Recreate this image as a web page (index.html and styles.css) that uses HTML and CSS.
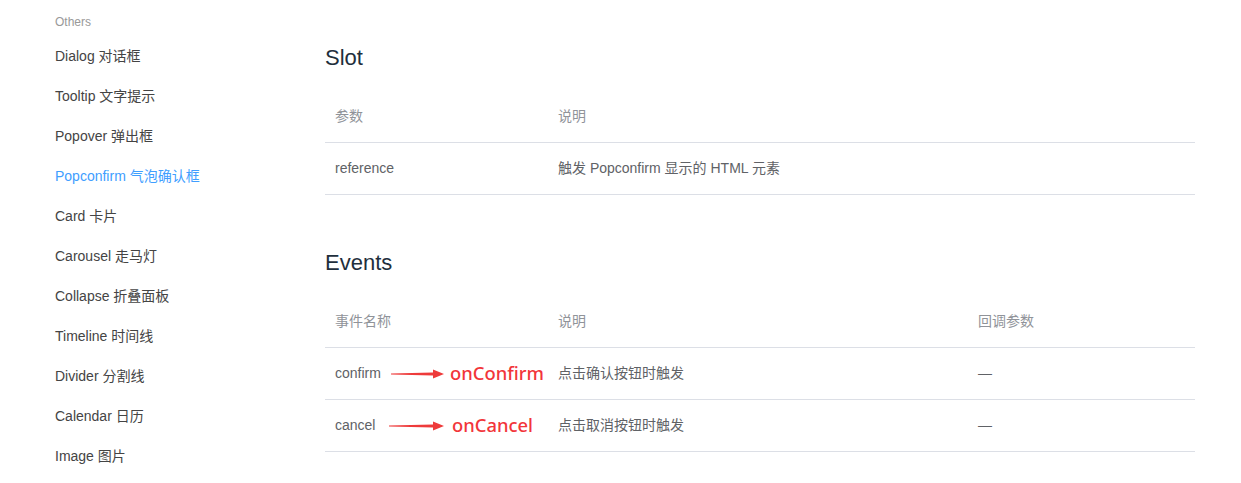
FILE: index.html
```html
<!DOCTYPE html>
<html lang="zh">
<head>
<meta charset="utf-8">
<link rel="stylesheet" href="styles.css">
</head>
<body>
<div class="page">
  <aside class="side">
    <div class="group-title">Others</div>
    <ul class="nav">
      <li><a>Dialog 对话框</a></li>
      <li><a>Tooltip 文字提示</a></li>
      <li><a>Popover 弹出框</a></li>
      <li><a class="active">Popconfirm 气泡确认框</a></li>
      <li><a>Card 卡片</a></li>
      <li><a>Carousel 走马灯</a></li>
      <li><a>Collapse 折叠面板</a></li>
      <li><a>Timeline 时间线</a></li>
      <li><a>Divider 分割线</a></li>
      <li><a>Calendar 日历</a></li>
      <li><a>Image 图片</a></li>
    </ul>
  </aside>
  <main class="content">
    <h3 class="title first">Slot</h3>
    <table class="tbl">
      <colgroup><col class="c1"><col></colgroup>
      <thead><tr><th>参数</th><th>说明</th></tr></thead>
      <tbody><tr><td>reference</td><td>触发 Popconfirm 显示的 HTML 元素</td></tr></tbody>
    </table>
    <h3 class="title">Events</h3>
    <table class="tbl">
      <colgroup><col class="c1"><col class="c2"><col></colgroup>
      <thead><tr><th>事件名称</th><th>说明</th><th>回调参数</th></tr></thead>
      <tbody>
        <tr>
          <td class="anno-cell">confirm
            <span class="anno anno-confirm">
              <svg class="arrow" width="54" height="10" viewBox="0 0 54 10"><path d="M0 4.6 L42 3.4 L42 0.5 L53 5 L42 9.5 L42 6.4 L0 5.4 Z" fill="#ee3b3b"/></svg>
              <span class="anno-text">onConfirm</span>
            </span>
          </td>
          <td>点击确认按钮时触发</td><td>—</td>
        </tr>
        <tr>
          <td class="anno-cell">cancel
            <span class="anno anno-cancel">
              <svg class="arrow" width="56" height="10" viewBox="0 0 56 10"><path d="M0 4.6 L44 3.4 L44 0.5 L55 5 L44 9.5 L44 6.4 L0 5.4 Z" fill="#ee3b3b"/></svg>
              <span class="anno-text">onCancel</span>
            </span>
          </td>
          <td>点击取消按钮时触发</td><td>—</td>
        </tr>
      </tbody>
    </table>
  </main>
</div>
</body>
</html>
```
FILE: styles.css
```css
html, body {
  margin: 0;
  padding: 0;
  background: #fff;
}
body {
  font-family: "Liberation Sans", Arial, "Noto Sans CJK SC", sans-serif;
  -webkit-font-smoothing: antialiased;
}
.page {
  display: flex;
  align-items: flex-start;
  width: 1241px;
}
.side {
  width: 270px;
  flex: none;
  padding: 9px 0 0 55px;
  box-sizing: border-box;
}
.group-title {
  font-size: 12px;
  line-height: 26px;
  color: #999;
  margin-bottom: 1px;
}
.nav {
  list-style: none;
  margin: 0;
  padding: 0;
}
.nav a {
  display: block;
  height: 40px;
  line-height: 40px;
  font-size: 14px;
  color: #444;
  white-space: nowrap;
}
.nav a.active {
  color: #409eff;
}
.content {
  width: 870px;
  flex: none;
  margin-left: 55px;
}
.title {
  font-size: 22px;
  font-weight: 400;
  color: #1f2f3d;
  line-height: 26px;
  margin: 55px 0 20px;
}
.title.first {
  margin-top: 45px;
}
.tbl {
  width: 100%;
  border-collapse: collapse;
  font-size: 14px;
  line-height: 21px;
  table-layout: fixed;
}
.tbl .c1 { width: 218px; }
.tbl .c2 { width: 420px; }
.tbl th, .tbl td {
  text-align: left;
  padding: 15px;
  border-bottom: 1px solid #dcdfe6;
  white-space: nowrap;
}
.tbl th:first-child, .tbl td:first-child {
  padding-left: 10px;
}
.tbl th {
  font-weight: 400;
  color: #909399;
}
.tbl td {
  color: #606266;
}
.anno-cell {
  position: relative;
}
.anno {
  position: absolute;
  top: 15px;
  display: flex;
  align-items: center;
  height: 21px;
}
.anno-confirm { left: 66px; }
.anno-cancel { left: 64px; }
.arrow {
  flex: none;
  display: block;
}
.anno-text {
  font-family: "Noto Sans", sans-serif;
  font-size: 18.4px;
  font-weight: 500;
  color: #f2353a;
  margin-left: 5px;
  margin-top: -3px;
}
.anno-cancel .anno-text {
  margin-left: 7px;
}
```
